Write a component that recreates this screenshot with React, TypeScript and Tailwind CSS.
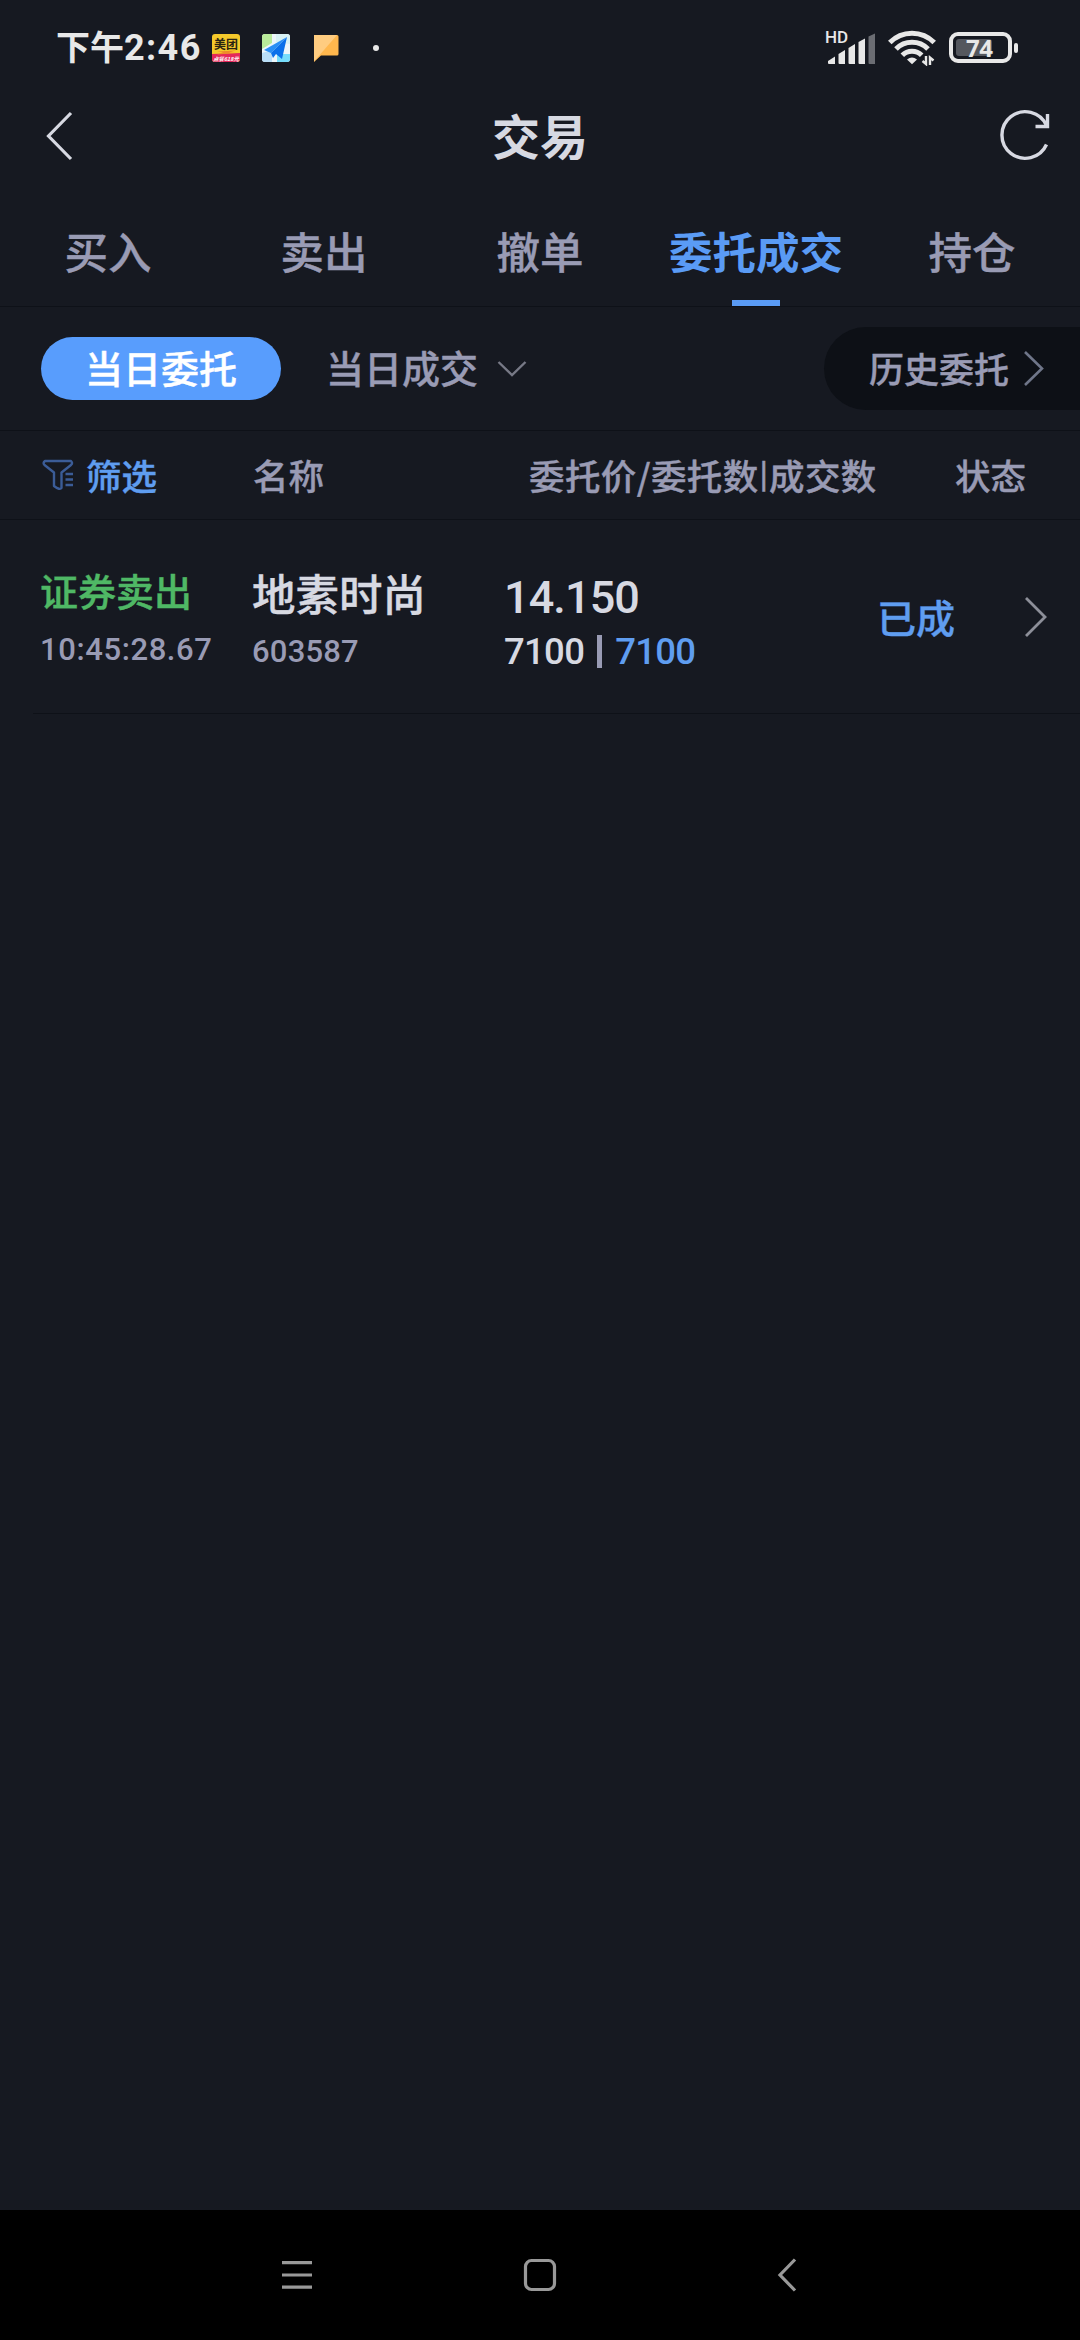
import clsx from "clsx";

const tabs = ["买入", "卖出", "撤单", "委托成交", "持仓"];

const orders = [
  {
    side: "证券卖出",
    time: "10:45:28.67",
    name: "地素时尚",
    code: "603587",
    price: "14.150",
    amount: "7100",
    filled: "7100",
    status: "已成",
  },
];

const StatusBar = () => (
  <div className="flex h-[95px] items-center pl-[56px] pr-[62px] text-[#e8e8e8]">
    <div className="flex h-[36px] w-[156px] items-center whitespace-nowrap font-bold leading-none">
      <span className="-mt-[3px] text-[34px]">下午</span>
      <span className="font-['Roboto'] text-[36px] tracking-[1.4px]">2:46</span>
    </div>

    {/* Meituan */}
    <svg className="h-7 w-7" viewBox="0 0 28 28">
      <rect width="28" height="28" rx="3" fill="#f5c92b" />
      <path d="M0 20 L28 19 V25 a3 3 0 0 1 -3 3 H3 a3 3 0 0 1 -3 -3 Z" fill="#e5285a" />
      <path d="M5 17.5 L24 16.5 L17 18.5 L25 19 L5 20.5 L11 18.5 Z" fill="#ef8a2a" />
      <text x="14" y="14.5" textAnchor="middle" fontSize="12" fontWeight="700" fill="#2a2412">美团</text>
      <text x="14" y="26.6" textAnchor="middle" fontSize="5.4" fontWeight="700" fontStyle="italic" fill="#fff">点餐618元</text>
    </svg>

    {/* Maps */}
    <svg className="ml-[22px] h-7 w-7" viewBox="0 0 28 28">
      <clipPath id="map">
        <rect width="28" height="28" rx="3" />
      </clipPath>
      <g clipPath="url(#map)">
        <rect width="28" height="28" fill="#edf6fa" />
        <path d="M0 0 H10 V9 L0 15 Z" fill="#b9eb9a" />
        <path d="M14 0 H28 V10 L14 8 Z" fill="#d8f2f4" />
        <path d="M0 19 L10 16 V28 H0 Z" fill="#b9def8" />
        <path d="M15 28 V20 H28 V28 Z" fill="#76dcfb" />
        <path d="M25 3 L2 16 L9 19 Z" fill="#2a8ff5" />
        <path d="M25 3 L9 19 L11 24 L14 20 L20 25 Z" fill="#0b70ea" />
      </g>
    </svg>

    {/* Message */}
    <svg className="ml-[23px] h-[28px] w-[26px]" viewBox="0 0 26 28">
      <path d="M1 1 H24 a1.5 1.5 0 0 1 1.5 1.5 V20 a1.5 1.5 0 0 1 -1.5 1.5 H8 L1 28 Z" fill="#ffb74d" />
      <path d="M1 1 H24 L1 27.5 Z" fill="#ffcc80" />
    </svg>
    <span className="ml-[34px] h-[6px] w-[6px] rounded-full bg-[#e8e8e8]" />

    <svg className="ml-auto h-[42px] w-[52px] overflow-visible" viewBox="0 -4 52 42" fill="currentColor">
      <text x="0" y="12" fontSize="17" fontWeight="500" fontFamily="Roboto">HD</text>
      <path d="M3 30 L10 25.5 V33 H4 a1 1 0 0 1 -1 -1 Z" />
      <path d="M13.5 23 L20 19 V33 H14.5 a1 1 0 0 1 -1 -1 Z" />
      <path d="M23.5 17 L30 13 V33 H24.5 a1 1 0 0 1 -1 -1 Z" />
      <path d="M33.5 11 L40 7.5 V33 H34.5 a1 1 0 0 1 -1 -1 Z" />
      <path d="M43.5 5.5 L50 2.5 V33 H44.5 a1 1 0 0 1 -1 -1 Z" fill="#6b6d73" />
    </svg>
    <svg className="ml-[11px] h-[36px] w-[48px]" viewBox="0 0 48 36" fill="none" stroke="currentColor" strokeWidth="5">
      <path d="M1.8 12.5 A31 31 0 0 1 46.2 12.5" />
      <path d="M8 19 A22.4 22.4 0 0 1 40 19" />
      <path d="M14.3 25.2 A13.6 13.6 0 0 1 33.7 25.2" />
      <path d="M19 29.5 Q24 25.5 29 29.5 L24 34.2 Z" fill="currentColor" stroke="none" />
      <path d="M38 26 V34 L34.5 31 M42 35 V27.5 L45.5 30.5" strokeWidth="2.4" />
    </svg>
    <div className="ml-[13px] flex h-[31px] w-[63px] items-center rounded-[9px] border-4 border-[#e8e8e8] pl-[3px]">
      <div className="flex h-[17px] w-[36px] items-center rounded-[3px] bg-[#54575e] pl-[10px]">
        <span className="whitespace-nowrap font-['Open_Sans'] text-[24px] font-bold leading-none tracking-[-0.5px]">74</span>
      </div>
    </div>
    <span className="ml-[2px] h-[10px] w-[4px] shrink-0 rounded-full bg-[#e8e8e8]" />
  </div>
);

const Header = () => (
  <header className="flex h-[82px] items-center justify-between pl-[46px] pr-[29px] text-[#d7d9e2]">
    <svg className="h-[50px] w-[54px]" viewBox="0 0 54 50" fill="none" stroke="currentColor" strokeWidth="3.2">
      <path d="M25 2 L2.5 25 L25 48" />
    </svg>
    <h1 className="-mt-[5px] mr-[17px] text-[48px] font-bold leading-none">交易</h1>
    <svg className="-mt-[2px] h-[54px] w-[54px]" viewBox="0 0 54 54" fill="none" stroke="currentColor" strokeWidth="3.4">
      <path d="M49.5 36.5 A23.3 23.3 0 1 1 49.5 17.5" />
      <path d="M50.5 6 V18.5 H38.5" />
    </svg>
  </header>
);

const Tabs = () => (
  <nav className="flex h-[130px] border-b border-[#0e1118]">
    {tabs.map((tab) => {
      const active = tab === "委托成交";
      return (
        <div key={tab} className="flex w-[216px] flex-col items-center justify-between">
          <span
            className={clsx(
              "mt-[52px] text-[43.5px] leading-none",
              active ? "font-bold text-[#5a9bf5]" : "font-medium text-[#999bb4] [-webkit-text-stroke:0.4px]"
            )}
          >
            {tab}
          </span>
          {active && <span className="h-[6px] w-[48px] bg-[#5a9bf5]" />}
        </div>
      );
    })}
  </nav>
);

const Filters = () => (
  <div className="flex h-[124px] items-center border-b border-[#0e1118] pl-[41px] text-[#999bb4] [-webkit-text-stroke:0.4px]">
    <button className="flex h-[63px] w-[240px] items-center justify-center rounded-full bg-[#589dfd] pb-[3px] text-[38px] font-medium leading-none text-white">
      当日委托
    </button>
    <button className="ml-[45px] flex items-center text-[38px] font-medium leading-none">
      <span className="-mt-[3px]">当日成交</span>
      <svg className="ml-[19px] h-[18px] w-[30px]" viewBox="0 0 30 18" fill="none" stroke="#777986" strokeWidth="2.4">
        <path d="M1.5 2 L15 15 L28.5 2" />
      </svg>
    </button>
    <button className="ml-auto flex h-[83px] w-[256px] items-center rounded-l-full bg-[#0d1016] pl-[45px] text-[35px] font-medium leading-none">
      <span className="-mt-[2px]">历史委托</span>
      <svg className="ml-[14px] h-[38px] w-[24px]" viewBox="0 0 24 38" fill="none" stroke="#6f7689" strokeWidth="2.6">
        <path d="M2 2 L19 18.5 L2 35" />
      </svg>
    </button>
  </div>
);

const TableHead = () => (
  <div className="flex h-[89px] items-center border-b border-[#0e1118] pl-[42px] text-[35.5px] font-medium leading-none text-[#999bb4] [-webkit-text-stroke:0.4px]">
    <div className="flex w-[211px] items-center text-[#5f9df0]">
      <svg className="mr-[12px] h-[32px] w-[32px]" viewBox="0 0 32 32" fill="none" stroke="#3b5c97" strokeWidth="2.4" strokeLinejoin="round">
        <path d="M3 2 H29 Q31 4 29 6 L19.5 13.5 V29 Q18 31.5 12 27 V13.5 L2.5 6 Q0.5 4 3 2 Z" />
        <path d="M23.5 15 H31 M23.5 20.5 H31 M23.5 26 H31" />
      </svg>
      筛选
    </div>
    <span className="w-[276px]">名称</span>
    <div className="flex w-[426px] items-center whitespace-nowrap tracking-[0.4px]">
      委托价/委托数
      <span className="-mt-[5px] px-[1px] text-[27px] font-bold">|</span>
      成交数
    </div>
    <span>状态</span>
  </div>
);

const OrderRow = ({ order }: { order: (typeof orders)[number] }) => (
  <div className="ml-[33px] flex h-[194px] border-b border-[#0e1118] font-medium leading-none">
    <div className="w-[219px] pl-[7px] pt-[51px]">
      <div className="text-[38px] text-[#4fb865] [-webkit-text-stroke:0.4px]">{order.side}</div>
      <div className="mt-[25px] font-['Roboto'] text-[31px] tracking-[0.6px] text-[#999bb4]">{order.time}</div>
    </div>
    <div className="w-[252px] pt-[51px]">
      <div className="text-[43.5px] text-[#d7d9e2] [-webkit-text-stroke:0.4px]">{order.name}</div>
      <div className="mt-[21px] font-['Roboto'] text-[31px] tracking-[0.2px] text-[#999bb4]">{order.code}</div>
    </div>
    <div className="w-[373px] pt-[55px] font-['Roboto'] text-[#d7d9e2]">
      <div className="text-[45px] tracking-[-0.9px]">{order.price}</div>
      <div className="mt-[12px] flex items-center text-[36.5px] tracking-[-0.7px]">
        <span className="mt-[2px]">{order.amount}</span>
        <span className="mx-[13px] h-[33px] w-[5px] bg-[#999bb4]" />
        <span className="mt-[2px] text-[#5f9df0]">{order.filled}</span>
      </div>
    </div>
    <div className="w-[147px] pt-[77px] text-[39px] text-[#5f9df0] [-webkit-text-stroke:0.4px]">{order.status}</div>
    <svg className="mt-[76px] h-[42px] w-[26px]" viewBox="0 0 26 42" fill="none" stroke="#8d8f99" strokeWidth="2.8">
      <path d="M2 2 L21 21 L2 40" />
    </svg>
  </div>
);

const NavBar = () => (
  <div className="flex h-[130px] items-center bg-black pl-[281px] text-[#999999]">
    <svg className="h-[34px] w-[32px]" viewBox="0 0 32 34" fill="none" stroke="currentColor" strokeWidth="3.2">
      <path d="M1 4.7 H31 M1 17 H31 M1 29.2 H31" />
    </svg>
    <svg className="ml-[210px] h-[34px] w-[34px]" viewBox="0 0 34 34" fill="none" stroke="currentColor" strokeWidth="3.2">
      <rect x="2.5" y="2.5" width="29" height="29" rx="6" />
    </svg>
    <svg className="ml-[220px] h-[34px] w-[20px]" viewBox="0 0 20 34" fill="none" stroke="currentColor" strokeWidth="3.2">
      <path d="M18 1.5 L3 17 L18 32.5" />
    </svg>
  </div>
);

const App = () => {
  return (
    <div className="flex h-[2340px] w-[1080px] flex-col overflow-hidden bg-[#161921] font-['Noto_Sans_CJK_SC',sans-serif]">
      <StatusBar />
      <Header />
      <Tabs />
      <Filters />
      <TableHead />
      <main className="flex-1">
        {orders.map((order) => (
          <OrderRow key={order.time} order={order} />
        ))}
      </main>
      <NavBar />
    </div>
  );
};

export default App;
